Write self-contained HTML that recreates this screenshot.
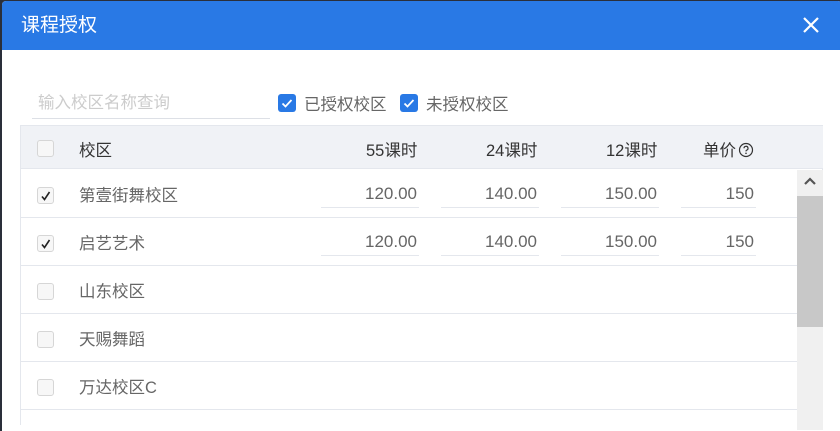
<!DOCTYPE html>
<html><head><meta charset="utf-8"><style>
*{margin:0;padding:0;box-sizing:border-box}
body{width:840px;height:421px;overflow:hidden;background:#2a2f3a;font-family:"Liberation Sans","Noto Sans CJK SC",sans-serif;position:relative}
.dlg{position:absolute;left:2px;top:1px;width:840px;height:430px;background:#fff;border-radius:4px 4px 0 0;overflow:hidden}
.hd{height:49px;background:#2979e5;color:#fff;font-size:19px;line-height:49px;padding-left:19px}
.x{position:absolute;left:798px;top:13px;width:22px;height:22px}
.ab{position:absolute}
.inp{left:30px;top:87px;width:238px;height:31px;border-bottom:1px solid #dde0e6;color:#ccc;font-size:16.5px;padding-left:6px;line-height:30px}
.cb{position:absolute;width:18px;height:18px;border-radius:3px}
.cb.b{background:#2979e5}
.cb.g{border:1px solid #d6d6d6;background:#f7f7f7;width:17px;height:17px;border-radius:3px}
.lbl{font-size:16.5px;color:#666}
.tbl{position:absolute;left:18px;top:124px;width:803px;height:300px;border-left:1px solid #e4e7ed;border-right:1px solid #e4e7ed}
.th{position:absolute;left:0;top:0;width:802px;height:44px;background:#f0f2f6;border-top:1px solid #e4e7ed;border-bottom:1px solid #e4e7ed}
.t{position:absolute;font-size:16.5px;white-space:nowrap}
.rl{position:absolute;left:0;width:776px;height:1px;background:#e4e7ed}
.v{position:absolute;height:26px;border-bottom:1px solid #e4e7ed;text-align:right;font-size:17px;color:#666;line-height:24px;padding-right:2px}
</style></head><body>
<div class="dlg">
<div class="hd">课程授权</div>
<svg class="x" viewBox="0 0 22 22"><path d="M4 4L18 18M18 4L4 18" stroke="#fff" stroke-width="2.2"/></svg>
<div class="ab inp">输入校区名称查询</div>
<div class="cb b" style="left:276px;top:93px"><svg width="18" height="18"><path d="M4.5 9.5l3 3 6-6.5" stroke="#fff" stroke-width="1.8" fill="none"/></svg></div>
<div class="ab lbl" style="left:302px;top:90px">已授权校区</div>
<div class="cb b" style="left:398px;top:93px"><svg width="18" height="18"><path d="M4.5 9.5l3 3 6-6.5" stroke="#fff" stroke-width="1.8" fill="none"/></svg></div>
<div class="ab lbl" style="left:424px;top:90px">未授权校区</div>
<div class="tbl">
<div class="th"></div>
<div class="cb g" style="left:16px;top:15px"></div>
<div class="t" style="left:58px;top:12px;color:#333">校区</div>
<div class="t" style="left:345px;top:12px;color:#333">55课时</div>
<div class="t" style="left:465px;top:12px;color:#333">24课时</div>
<div class="t" style="left:585px;top:12px;color:#333">12课时</div>
<div class="t" style="left:682px;top:12px;color:#333">单价<svg width="16" height="16" style="vertical-align:-2px;margin-left:2px" viewBox="0 0 16 16"><circle cx="8" cy="8" r="6.5" stroke="#333" stroke-width="1.2" fill="none"/><path d="M6 6.3a2 2 0 1 1 2.6 1.9c-.5.2-.6.5-.6 1.2" stroke="#333" stroke-width="1.2" fill="none"/><circle cx="8" cy="11.3" r=".8" fill="#333"/></svg></div>

<div class="cb g" style="left:16px;top:62px"><svg width="16" height="16" style="position:absolute;left:0;top:0"><path d="M4 8.5l2.5 3L11.5 4" stroke="#222" stroke-width="1.6" fill="none"/></svg></div>
<div class="t" style="left:58px;top:57px;color:#666">第壹街舞校区</div>
<div class="v" style="left:300px;top:57px;width:98px">120.00</div>
<div class="v" style="left:420px;top:57px;width:98px">140.00</div>
<div class="v" style="left:540px;top:57px;width:98px">150.00</div>
<div class="v" style="left:660px;top:57px;width:75px">150</div>
<div class="rl" style="top:92px"></div>

<div class="cb g" style="left:16px;top:110px"><svg width="16" height="16" style="position:absolute;left:0;top:0"><path d="M4 8.5l2.5 3L11.5 4" stroke="#222" stroke-width="1.6" fill="none"/></svg></div>
<div class="t" style="left:58px;top:105px;color:#666">启艺艺术</div>
<div class="v" style="left:300px;top:105px;width:98px">120.00</div>
<div class="v" style="left:420px;top:105px;width:98px">140.00</div>
<div class="v" style="left:540px;top:105px;width:98px">150.00</div>
<div class="v" style="left:660px;top:105px;width:75px">150</div>
<div class="rl" style="top:140px"></div>

<div class="cb g" style="left:16px;top:158px"></div>
<div class="t" style="left:58px;top:153px;color:#666">山东校区</div>
<div class="rl" style="top:188px"></div>
<div class="cb g" style="left:16px;top:206px"></div>
<div class="t" style="left:58px;top:201px;color:#666">天赐舞蹈</div>
<div class="rl" style="top:236px"></div>
<div class="cb g" style="left:16px;top:254px"></div>
<div class="t" style="left:58px;top:249px;color:#666">万达校区C</div>
<div class="rl" style="top:284px"></div>

<div class="ab" style="left:776px;top:45px;width:26px;height:260px;background:#f0f0f0"></div>
<div class="ab" style="left:776px;top:71px;width:26px;height:131px;background:#c8c8c8"></div>
<svg class="ab" style="left:781px;top:51px" width="16" height="12"><path d="M3 8l5-5 5 5" stroke="#555" stroke-width="2.2" fill="none"/></svg>
</div>
</div>
</body></html>
